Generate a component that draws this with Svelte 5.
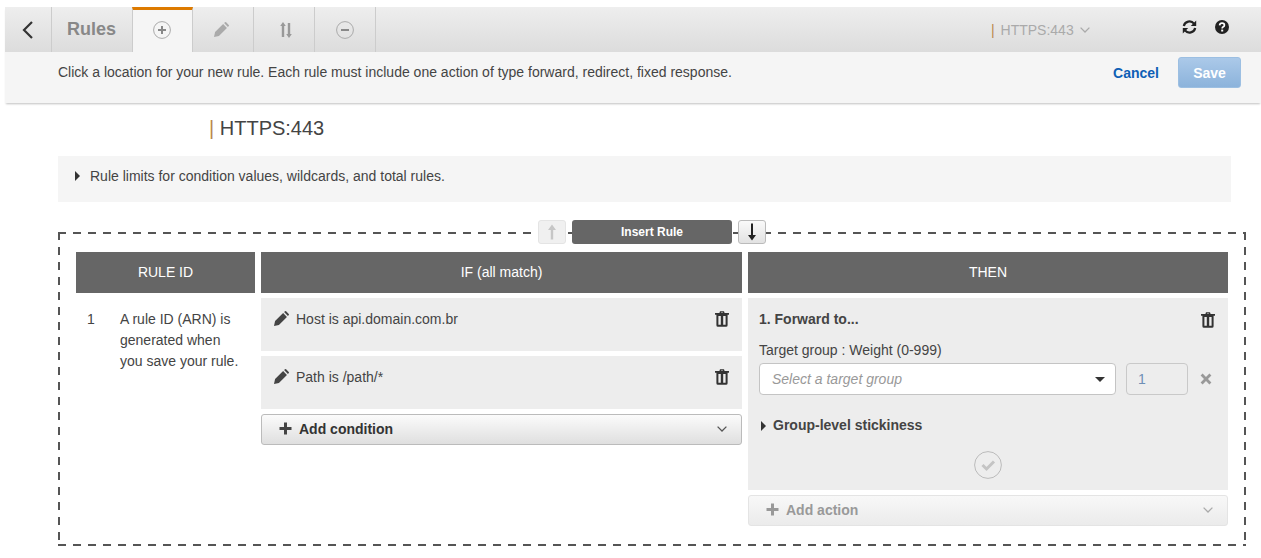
<script>
  const tabs = ['add', 'edit', 'order', 'remove']
</script>

<style>
  :global(body) {
    margin: 0;
    background: #fff;
    font-family: "Liberation Sans", Arial, sans-serif;
    font-size: 14px;
    color: #444;
  }

  button {
    font: inherit;
    margin: 0;
    padding: 0;
    cursor: pointer;
  }

  svg {
    display: block;
    flex: none;
  }

  .page {
    width: 1261px;
    height: 558px;
    overflow: hidden;
    padding-top: 7px;
    box-sizing: border-box;
  }

  .header {
    margin-left: 5px;
    height: 96px;
    box-shadow: 0 2px 2px -1px rgba(0, 0, 0, .25);
  }

  .toolbar {
    height: 45px;
    display: flex;
    background: linear-gradient(#eeeeee, #dcdcdc);
  }

  .tab {
    display: flex;
    align-items: center;
    justify-content: center;
    border: 0;
    border-right: 1px solid #cccccc;
    background: none;
    margin-right: 3px;
    color: #999;
    box-sizing: border-box;
    width: 58px;
  }

  .tab.back {
    width: 47px;
    color: #333;
  }

  .tab.title {
    width: 77px;
    margin-right: 0;
    padding-right: 4px;
    font-size: 18px;
    font-weight: bold;
    color: #888;
    border-right: 0;
  }

  .tab.active {
    width: 61px;
    background: #f5f5f5;
    border-left: 1px solid #cccccc;
    border-top: 3px solid #dd7a00;
    padding: 0 2px 3px 0;
  }

  .tab.edit {
    padding-right: 7px;
  }

  .tab.remove {
    padding-right: 3px;
  }

  .listener {
    margin-left: 612px;
    width: 170px;
    display: flex;
    align-items: center;
    gap: 6px;
    font-size: 14px;
    color: #aaa;
  }

  .listener .mark {
    margin-right: 2px;
  }

  .mark {
    color: #b9884a;
  }

  .tool-icons {
    display: flex;
    gap: 18px;
    margin-left: 21px;
    padding-top: 13px;
    color: #222;
  }

  .message {
    height: 51px;
    background: #f5f5f5;
    display: flex;
    align-items: flex-start;
    padding: 5px 20px 0 53px;
    box-sizing: border-box;
  }

  .message p {
    flex: 1;
    margin: 5px 0 0;
    line-height: 21px;
  }

  .cancel {
    border: 0;
    background: none;
    color: #0e5fb5;
    font-weight: bold;
    margin: 0 19px 0 0;
    height: 31px;
  }

  .save {
    width: 63px;
    height: 31px;
    border: 1px solid #9cbfe2;
    border-radius: 3px;
    background: linear-gradient(#abc9e9, #8cb3db);
    color: #fff;
    font-weight: bold;
  }

  h1 {
    margin: 13px 0 0 209px;
    font-size: 20px;
    font-weight: normal;
    line-height: 24px;
    color: #444;
  }

  .limits {
    margin: 16px 30px 0 58px;
    height: 46px;
    background: #f5f5f5;
    display: flex;
    align-items: center;
    gap: 10px;
    padding: 0 0 6px 17px;
    box-sizing: border-box;
  }

  .caret {
    width: 0;
    height: 0;
    border-left: 5px solid #333;
    border-top: 5px solid transparent;
    border-bottom: 5px solid transparent;
  }

  .frame {
    --dash-h: repeating-linear-gradient(90deg, #555 0 8px, transparent 8px 15px);
    --dash-v: repeating-linear-gradient(180deg, #555 0 8px, transparent 8px 15px);
    position: relative;
    margin: 30px 15px 0 58px;
    height: 314px;
    box-sizing: border-box;
    padding: 20px 19px 0 18px;
    display: grid;
    grid-template-columns: 179px 481px 480px;
    column-gap: 6px;
    align-content: start;
    align-items: start;
    background:
      var(--dash-h) left top / 100% 2px no-repeat,
      var(--dash-h) left bottom / 100% 2px no-repeat,
      var(--dash-v) left top / 2px 100% no-repeat,
      var(--dash-v) right top / 2px 100% no-repeat;
  }

  .insert {
    position: absolute;
    top: -12px;
    left: 480px;
    display: flex;
    gap: 6px;
  }

  .arrow {
    width: 28px;
    height: 24px;
    display: flex;
    align-items: center;
    justify-content: center;
    border: 1px solid #bbb;
    border-radius: 3px;
    background: linear-gradient(#fafafa, #e2e2e2);
    color: #222;
  }

  .arrow:disabled {
    border-color: #e4e4e4;
    background: #f0f0f0;
    color: #c6c6c6;
  }

  .insert-label {
    width: 160px;
    height: 24px;
    border: 0;
    border-radius: 3px;
    background: #666;
    color: #fff;
    font-size: 12px;
    font-weight: bold;
    padding-bottom: 1px;
  }

  .col-head {
    height: 41px;
    padding-bottom: 2px;
    box-sizing: border-box;
    background: #666;
    color: #fff;
    display: flex;
    align-items: center;
    justify-content: center;
  }

  .col {
    margin-top: 5px;
    display: flex;
    flex-direction: column;
    gap: 5px;
  }

  .rule-id {
    display: grid;
    grid-template-columns: 33px 1fr;
    padding: 11px 14px 0 11px;
    line-height: 21px;
  }

  .condition {
    height: 53px;
    background: #ededed;
    display: flex;
    align-items: flex-start;
    padding: 13px 13px 0 13px;
    box-sizing: border-box;
    gap: 7px;
    color: #444;
  }

  .condition span {
    flex: 1;
    margin-top: -2px;
    line-height: 21px;
  }

  .dropdown {
    height: 31px;
    width: 100%;
    display: flex;
    align-items: center;
    gap: 7px;
    padding: 0 14px 2px 17px;
    box-sizing: border-box;
    border: 1px solid #bbb;
    border-radius: 3px;
    background: linear-gradient(#fbfbfb, #dfdfdf);
    font-weight: bold;
    color: #333;
    text-align: left;
  }

  .dropdown span {
    flex: 1;
  }

  .dropdown.off {
    border-color: #e4e4e4;
    background: linear-gradient(#f8f8f8, #ebebeb);
    color: #999;
  }

  .action {
    height: 192px;
    background: #ededed;
    padding: 11px 13px 0 11px;
    box-sizing: border-box;
  }

  .action-title {
    display: flex;
    justify-content: space-between;
    font-weight: bold;
    line-height: 21px;
    height: 21px;
    align-items: center;
  }

  .action label {
    display: block;
    margin-top: 10px;
    line-height: 20px;
  }

  .target {
    display: flex;
    margin-top: 3px;
    align-items: center;
  }

  .select {
    width: 357px;
    height: 32px;
    background: #fff;
    border: 1px solid #c4c4c4;
    border-radius: 4px;
    box-sizing: border-box;
    display: flex;
    align-items: center;
    padding: 0 10px 0 12px;
    color: #999;
    font-style: italic;
  }

  .select span {
    flex: 1;
  }

  .select i {
    width: 0;
    height: 0;
    border-top: 5px solid #333;
    border-left: 5px solid transparent;
    border-right: 5px solid transparent;
  }

  .weight {
    width: 62px;
    height: 32px;
    margin-left: 10px;
    padding: 0 0 0 11px;
    border: 1px solid #c9c9c9;
    border-radius: 4px;
    box-sizing: border-box;
    background: #ededed;
    font: inherit;
    color: #6f8fb5;
  }

  .clear {
    margin-left: 12px;
    color: #999;
  }

  .sticky {
    display: flex;
    align-items: center;
    gap: 7px;
    margin: 20px 0 0 2px;
    line-height: 21px;
    font-weight: bold;
  }

  .confirm {
    display: flex;
    justify-content: center;
    margin-top: 15px;
    padding-left: 2px;
  }
</style>

{#snippet pencil(color)}
  <svg width="15" height="15" viewBox="0 0 14 14" fill={color}>
    <path d="M0 14 L1 9.4 L8.5 1.9 L12.1 5.5 L4.6 13 Z M9.4 1 L10.3 0.2 Q10.8 -0.2 11.3 0.2 L13.8 2.7 Q14.2 3.2 13.8 3.7 L13 4.6 Z" />
  </svg>
{/snippet}

{#snippet trash()}
  <svg width="14" height="16" viewBox="0 0 14 16" fill="#333">
    <path d="M4.4 2 L5 0.2 H9 L9.6 2 H14 V3.8 H12.6 V14.2 Q12.6 15.8 11 15.8 H3 Q1.4 15.8 1.4 14.2 V3.8 H0 V2 Z M6 2 H8 L7.8 1.4 H6.2 Z M3.4 5 V13.8 H5.8 V5 Z M8.2 5 V13.8 H10.6 V5 Z" fill-rule="evenodd" />
  </svg>
{/snippet}

{#snippet plus(color)}
  <svg width="13" height="13" viewBox="0 0 13 13" fill={color}>
    <path d="M5 0.5 H8 V5 H12.5 V8 H8 V12.5 H5 V8 H0.5 V5 H5 Z" />
  </svg>
{/snippet}

{#snippet chevron(color)}
  <svg width="10" height="6" viewBox="0 0 10 6" fill="none" stroke={color} stroke-width="1.3">
    <path d="M0.6 0.6 L5 5 L9.4 0.6" />
  </svg>
{/snippet}

<div class="page">
  <div class="header">
    <div class="toolbar">
      <button class="tab back" aria-label="Back">
        <svg width="12" height="18" viewBox="0 0 12 18" fill="none" stroke="currentColor" stroke-width="2.2">
          <path d="M10 1 L2 9 L10 17" />
        </svg>
      </button>
      <div class="tab title">Rules</div>
      {#each tabs as tab}
        <div class="tab {tab}" class:active={tab === 'add'}>
          {#if tab === 'add'}
            <svg width="18" height="18" viewBox="0 0 18 18" fill="none" stroke="#999">
              <circle cx="9" cy="9" r="8.4" stroke="#aaa" />
              <path d="M9 5 V13 M5 9 H13" stroke="#888" stroke-width="2" />
            </svg>
          {:else if tab === 'edit'}
            {@render pencil('#aaa')}
          {:else if tab === 'order'}
            <svg width="12" height="16" viewBox="0 0 12 16" fill="#999">
              <path d="M3 0 L5.8 4 H4.2 V15 H1.8 V4 H0.2 Z M9 16 L6.2 12 H7.8 V1 H10.2 V12 H11.8 Z" />
            </svg>
          {:else}
            <svg width="18" height="18" viewBox="0 0 18 18" fill="none">
              <circle cx="9" cy="9" r="8.4" stroke="#aaa" />
              <path d="M5 9 H13" stroke="#888" stroke-width="2" />
            </svg>
          {/if}
        </div>
      {/each}
      <div class="listener">
        <span><span class="mark">|</span> HTTPS:443</span>
        {@render chevron('#aaa')}
      </div>
      <div class="tool-icons">
        <svg width="15" height="14" viewBox="0 0 15 14" fill="none" stroke="#222" stroke-width="2.2">
          <path d="M1.8 6 A5.8 5.8 0 0 1 12 3.6" />
          <path d="M13.2 8 A5.8 5.8 0 0 1 3 10.4" />
          <path d="M14.2 0.4 V6 H8.8 Z M0.8 13.6 V8 H6.2 Z" fill="#222" stroke="none" />
        </svg>
        <svg width="14" height="14" viewBox="0 0 14 14">
          <circle cx="7" cy="7" r="7" fill="#222" />
          <path d="M4.6 5.4 Q4.8 3.2 7 3.2 Q9.4 3.2 9.4 5.2 Q9.4 6.3 8 7 Q7.2 7.4 7.2 8.4" fill="none" stroke="#fff" stroke-width="1.7" />
          <rect x="6.2" y="9.6" width="2" height="1.9" fill="#fff" />
        </svg>
      </div>
    </div>
    <div class="message">
      <p>Click a location for your new rule. Each rule must include one action of type forward, redirect, fixed response.</p>
      <button class="cancel">Cancel</button>
      <button class="save">Save</button>
    </div>
  </div>

  <h1><span class="mark">|</span> HTTPS:443</h1>

  <div class="limits">
    <span class="caret"></span>
    <span>Rule limits for condition values, wildcards, and total rules.</span>
  </div>

  <div class="frame">
    <div class="insert">
      <button class="arrow" disabled aria-label="Move up">
        <svg width="10" height="16" viewBox="0 0 10 16" fill="currentColor">
          <path d="M5 0.5 L9 6 H6.2 V15.5 H3.8 V6 H1 Z" />
        </svg>
      </button>
      <button class="insert-label">Insert Rule</button>
      <button class="arrow" aria-label="Move down">
        <svg width="10" height="18" viewBox="0 0 10 18" fill="currentColor">
          <path d="M5 17.5 L9 12 H6 V0.5 H4 V12 H1 Z" />
        </svg>
      </button>
    </div>

    <div class="col-head">RULE ID</div>
    <div class="col-head">IF (all match)</div>
    <div class="col-head">THEN</div>

    <div class="col">
      <div class="rule-id">
        <span>1</span>
        <span>A rule ID (ARN) is generated when you save your rule.</span>
      </div>
    </div>

    <div class="col">
      <div class="condition">
        {@render pencil('#444')}
        <span>Host is api.domain.com.br</span>
        {@render trash()}
      </div>
      <div class="condition">
        {@render pencil('#444')}
        <span>Path is /path/*</span>
        {@render trash()}
      </div>
      <button class="dropdown">
        {@render plus('#444')}
        <span>Add condition</span>
        {@render chevron('#555')}
      </button>
    </div>

    <div class="col">
      <div class="action">
        <div class="action-title">
          <span>1. Forward to...</span>
          {@render trash()}
        </div>
        <label for="weight">Target group : Weight (0-999)</label>
        <div class="target">
          <div class="select">
            <span>Select a target group</span>
            <i></i>
          </div>
          <input id="weight" class="weight" value="1" />
          <svg class="clear" width="12" height="12" viewBox="0 0 12 12" fill="#999">
            <path d="M2.6 0.6 L6 4 L9.4 0.6 L11.4 2.6 L8 6 L11.4 9.4 L9.4 11.4 L6 8 L2.6 11.4 L0.6 9.4 L4 6 L0.6 2.6 Z" />
          </svg>
        </div>
        <div class="sticky">
          <span class="caret"></span>
          <span>Group-level stickiness</span>
        </div>
        <div class="confirm">
          <svg width="28" height="28" viewBox="0 0 28 28" fill="none">
            <circle cx="14" cy="14" r="13.4" stroke="#bbb" />
            <path d="M8.5 14 L12.5 18 L20 10.5" stroke="#c4c4c4" stroke-width="3" />
          </svg>
        </div>
      </div>
      <button class="dropdown off">
        {@render plus('#999')}
        <span>Add action</span>
        {@render chevron('#aaa')}
      </button>
    </div>
  </div>
</div>
